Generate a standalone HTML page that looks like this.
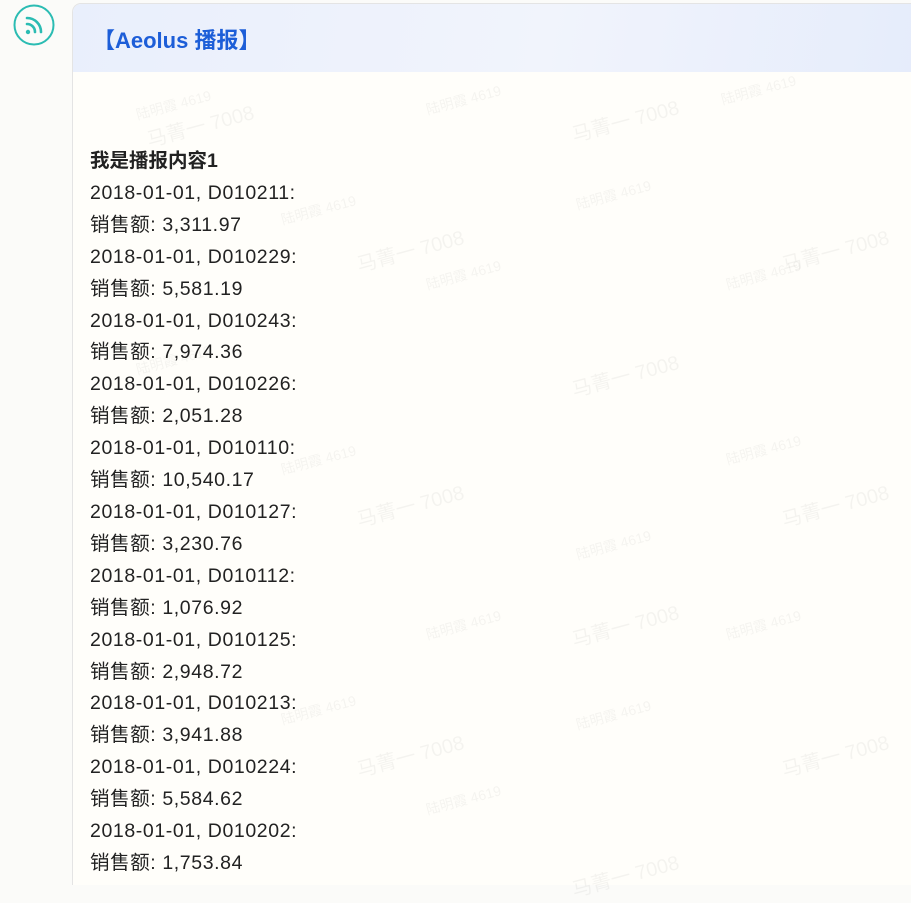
<!DOCTYPE html>
<html><head><meta charset="utf-8"><style>
html,body{margin:0;padding:0;width:911px;height:884px;overflow:hidden;background:#fbfbf9;font-family:"Liberation Sans","Noto Sans CJK SC",sans-serif;}
.icon{position:absolute;left:13px;top:4px;}
.card{position:absolute;left:72px;top:3px;width:860px;height:881px;border:1px solid #e4e4e4;border-bottom:none;border-radius:9px 9px 0 0;background:#fffefa;overflow:hidden;}
.hd{height:68px;background:linear-gradient(100deg,#e9effc 0%,#f1f4fc 55%,#e5ecfb 100%);}
.hd span{position:absolute;left:20px;top:19px;font-size:22px;font-weight:bold;color:#1d5ed8;}
.body{position:absolute;left:17px;top:142px;font-size:19.5px;line-height:31.9px;color:#222;letter-spacing:0.6px;}
.body b{font-weight:bold;letter-spacing:0;}
.wm{position:absolute;color:rgba(0,0,0,0.045);transform:rotate(-15deg);white-space:nowrap;}
.a{font-size:14px}.b{font-size:20px}
</style></head><body>
<svg class="icon" width="42" height="42" viewBox="0 0 42 42"><circle cx="21" cy="21" r="19.5" fill="none" stroke="#2bbcb3" stroke-width="2"/><circle cx="15" cy="28" r="2.2" fill="#2bbcb3"/><path d="M14 20 a8 8 0 0 1 8 8" fill="none" stroke="#2bbcb3" stroke-width="2.6" stroke-linecap="round"/><path d="M14 14 a14 14 0 0 1 14 14" fill="none" stroke="#2bbcb3" stroke-width="2.6" stroke-linecap="round"/></svg>
<div class="card"><div class="hd"><span>【Aeolus 播报】</span></div>
<div class="body"><b>我是播报内容1</b><br>2018-01-01, D010211:<br>销售额: 3,311.97<br>2018-01-01, D010229:<br>销售额: 5,581.19<br>2018-01-01, D010243:<br>销售额: 7,974.36<br>2018-01-01, D010226:<br>销售额: 2,051.28<br>2018-01-01, D010110:<br>销售额: 10,540.17<br>2018-01-01, D010127:<br>销售额: 3,230.76<br>2018-01-01, D010112:<br>销售额: 1,076.92<br>2018-01-01, D010125:<br>销售额: 2,948.72<br>2018-01-01, D010213:<br>销售额: 3,941.88<br>2018-01-01, D010224:<br>销售额: 5,584.62<br>2018-01-01, D010202:<br>销售额: 1,753.84</div></div>
<div class="wm a" style="left:135px;top:95px">陆明霞 4619</div><div class="wm b" style="left:145px;top:110px">马菁一 7008</div>
<div class="wm a" style="left:425px;top:90px">陆明霞 4619</div><div class="wm b" style="left:570px;top:105px">马菁一 7008</div>
<div class="wm a" style="left:720px;top:80px">陆明霞 4619</div>
<div class="wm a" style="left:280px;top:200px">陆明霞 4619</div><div class="wm b" style="left:355px;top:235px">马菁一 7008</div>
<div class="wm a" style="left:575px;top:185px">陆明霞 4619</div><div class="wm b" style="left:780px;top:235px">马菁一 7008</div>
<div class="wm a" style="left:425px;top:265px">陆明霞 4619</div><div class="wm a" style="left:725px;top:265px">陆明霞 4619</div>
<div class="wm a" style="left:135px;top:350px">陆明霞 4619</div><div class="wm b" style="left:570px;top:360px">马菁一 7008</div>
<div class="wm a" style="left:280px;top:450px">陆明霞 4619</div><div class="wm b" style="left:355px;top:490px">马菁一 7008</div>
<div class="wm a" style="left:725px;top:440px">陆明霞 4619</div><div class="wm b" style="left:780px;top:490px">马菁一 7008</div>
<div class="wm a" style="left:575px;top:535px">陆明霞 4619</div><div class="wm b" style="left:570px;top:610px">马菁一 7008</div>
<div class="wm a" style="left:425px;top:615px">陆明霞 4619</div><div class="wm a" style="left:725px;top:615px">陆明霞 4619</div>
<div class="wm a" style="left:280px;top:700px">陆明霞 4619</div><div class="wm b" style="left:355px;top:740px">马菁一 7008</div>
<div class="wm a" style="left:575px;top:705px">陆明霞 4619</div><div class="wm b" style="left:780px;top:740px">马菁一 7008</div>
<div class="wm a" style="left:425px;top:790px">陆明霞 4619</div><div class="wm b" style="left:570px;top:860px">马菁一 7008</div>
</body></html>
